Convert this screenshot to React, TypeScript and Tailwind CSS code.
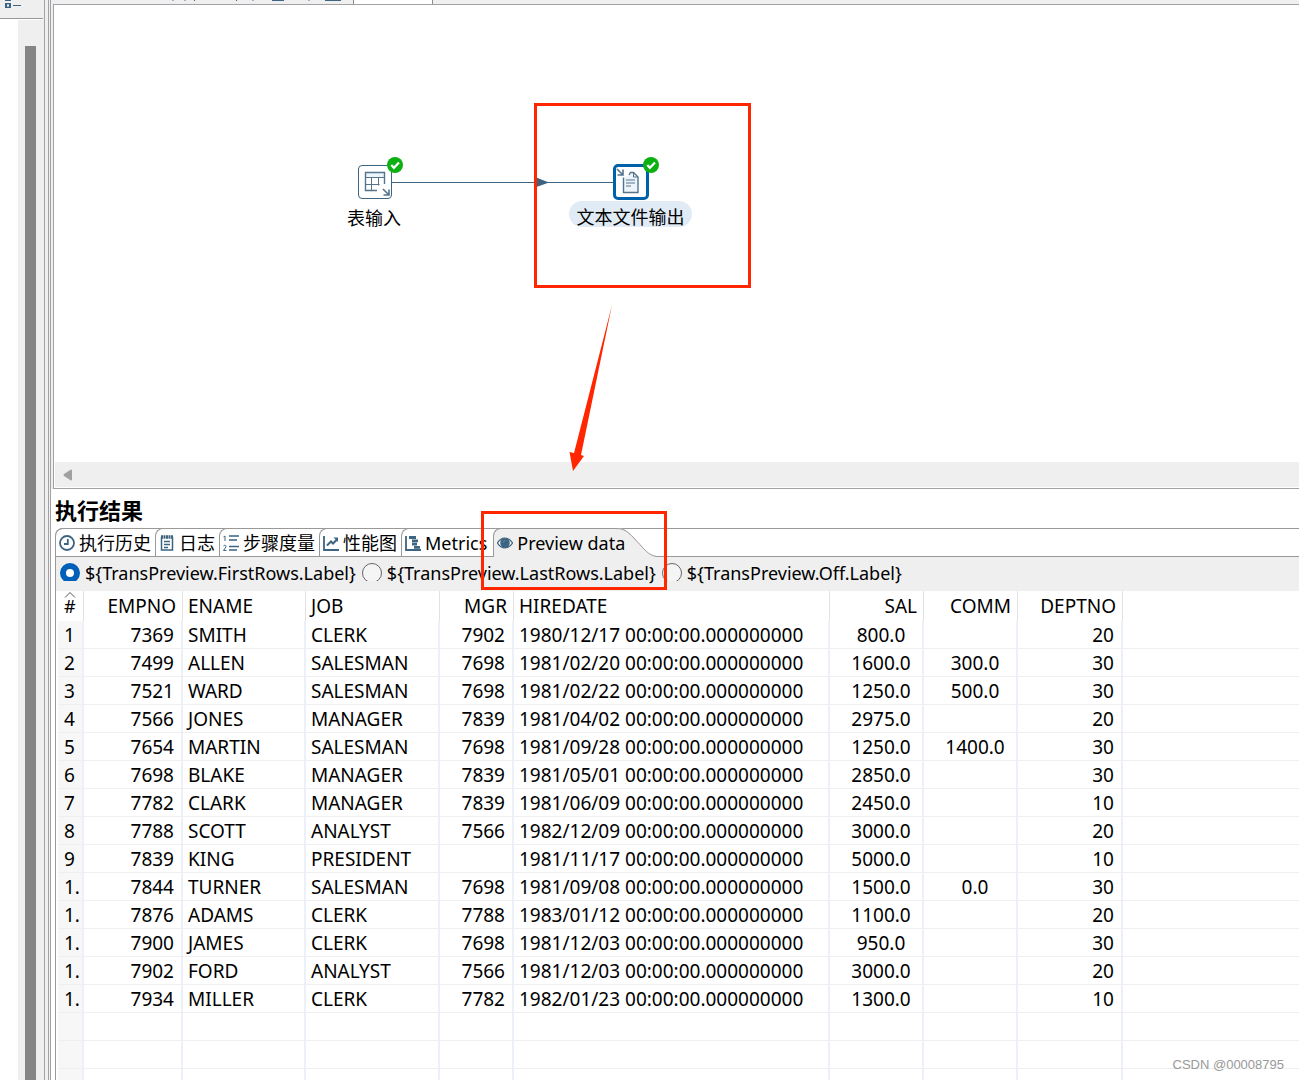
import type { ReactNode } from "react";

interface IEmployee {
	empno: string;
	ename: string;
	job: string;
	mgr: string;
	hiredate: string;
	sal: string;
	comm: string;
	deptno: string;
}

function employee(
	empno: string,
	ename: string,
	job: string,
	mgr: string,
	date: string,
	sal: string,
	comm: string,
	deptno: string,
): IEmployee {
	return { empno, ename, job, mgr, hiredate: `${date} 00:00:00.000000000`, sal, comm, deptno };
}

const employees: IEmployee[] = [
	employee("7369", "SMITH", "CLERK", "7902", "1980/12/17", "800.0", "", "20"),
	employee("7499", "ALLEN", "SALESMAN", "7698", "1981/02/20", "1600.0", "300.0", "30"),
	employee("7521", "WARD", "SALESMAN", "7698", "1981/02/22", "1250.0", "500.0", "30"),
	employee("7566", "JONES", "MANAGER", "7839", "1981/04/02", "2975.0", "", "20"),
	employee("7654", "MARTIN", "SALESMAN", "7698", "1981/09/28", "1250.0", "1400.0", "30"),
	employee("7698", "BLAKE", "MANAGER", "7839", "1981/05/01", "2850.0", "", "30"),
	employee("7782", "CLARK", "MANAGER", "7839", "1981/06/09", "2450.0", "", "10"),
	employee("7788", "SCOTT", "ANALYST", "7566", "1982/12/09", "3000.0", "", "20"),
	employee("7839", "KING", "PRESIDENT", "", "1981/11/17", "5000.0", "", "10"),
	employee("7844", "TURNER", "SALESMAN", "7698", "1981/09/08", "1500.0", "0.0", "30"),
	employee("7876", "ADAMS", "CLERK", "7788", "1983/01/12", "1100.0", "", "20"),
	employee("7900", "JAMES", "CLERK", "7698", "1981/12/03", "950.0", "", "30"),
	employee("7902", "FORD", "ANALYST", "7566", "1981/12/03", "3000.0", "", "20"),
	employee("7934", "MILLER", "CLERK", "7782", "1982/01/23", "1300.0", "", "10"),
];

const columns: {
	key: keyof IEmployee;
	label: string;
	width: string;
	head: string;
	cell: string;
}[] = [
	{ key: "empno", label: "EMPNO", width: "w-[99px]", head: "text-right pr-1.5", cell: "text-right pr-[7px]" },
	{ key: "ename", label: "ENAME", width: "w-[123px]", head: "text-left pl-[5px]", cell: "text-left pl-[5px]" },
	{ key: "job", label: "JOB", width: "w-[134px]", head: "text-left pl-[5px]", cell: "text-left pl-[5px]" },
	{ key: "mgr", label: "MGR", width: "w-[74px]", head: "text-right pr-1.5", cell: "text-right pr-[7px]" },
	{ key: "hiredate", label: "HIREDATE", width: "w-[316px]", head: "text-left pl-[5px]", cell: "text-left pl-[5px]" },
	{ key: "sal", label: "SAL", width: "w-[94px]", head: "text-right pr-1.5", cell: "text-center pl-2.5" },
	{ key: "comm", label: "COMM", width: "w-[94px]", head: "text-right pr-1.5", cell: "text-center pl-2.5" },
	{ key: "deptno", label: "DEPTNO", width: "w-[105px]", head: "text-right pr-1.5", cell: "text-right pr-[7px]" },
];

const emptyRows = [0, 1, 2];

const tabs: { label: string; icon: ReactNode }[] = [
	{
		label: "执行历史",
		icon: (
			<>
				<circle cx="8" cy="8" r="7" strokeWidth="1.8" />
				<path d="M8.8 4v5H5" strokeWidth="1.8" />
			</>
		),
	},
	{
		label: "日志",
		icon: (
			<>
				<path d="M2.500 2v13h11V2" strokeWidth="1.500" />
				<path d="M2 2h12.500" strokeWidth="3.500" strokeDasharray="2 .5" />
				<path d="M5 6.500h6M5 9.500h6M5 12.500h4" strokeWidth="1.300" />
			</>
		),
	},
	{
		label: "步骤度量",
		icon: (
			<>
				<path d="M6 1h10.500M6 5h8M6 11.500h10.500M6 15h8" strokeWidth="1.500" />
				<path d="M.5 2 2 1v5M.5 11c1-1.3 3-.8 2.500.8L.5 15.500H3.500" strokeWidth="1" />
			</>
		),
	},
	{
		label: "性能图",
		icon: (
			<>
				<path d="M1 1v14h15" strokeWidth="1.8" />
				<path d="m4 10.500 4-4 2 2 4-4" strokeWidth="2" />
				<path d="M10.500 2.500H15V7z" fill="#3d6480" stroke="none" />
			</>
		),
	},
	{
		label: "Metrics",
		icon: (
			<>
				<path d="M1 1v14h15" strokeWidth="1.8" />
				<path d="M4 2.500h7M7 5.800h6M7 9.200h5M9 12.300h6" strokeWidth="2.800" />
			</>
		),
	},
	{
		label: "Preview data",
		icon: (
			<>
				<path d="M.5 8c4-6.500 11-6.500 15 0-4 6.500-11 6.500-15 0z" fill="#fff" strokeWidth="1.300" />
				<circle cx="8" cy="8" r="4.800" fill="#3d6480" stroke="none" />
				<path d="M6 7.500c.2-1 .8-1.700 1.800-2" stroke="#6d8ba1" strokeWidth="1" />
			</>
		),
	},
];

const previewModes = [
	"${TransPreview.FirstRows.Label}",
	"${TransPreview.LastRows.Label}",
	"${TransPreview.Off.Label}",
];

function SidePanel() {
	return (
		<aside className="flex w-[43px] shrink-0 flex-col bg-white">
			<div className="h-[19px] shrink-0 border-b border-[#999999] bg-[#efefef]">
				<svg width="24" height="10" viewBox="0 0 24 10" fill="#3d6480">
					<path d="M5 0h6v1H5zM5 3h6v5H5z" />
					<path d="M7 4.500h2v2H7z" fill="#fff" />
					<path d="M13 5h8v1h-8z" />
				</svg>
			</div>
			<div className="mt-px ml-[18px] flex flex-1 justify-center bg-[#efefef] px-[7px] pt-[26px]">
				<div className="w-full bg-[#858585]" />
			</div>
		</aside>
	);
}

function Sash() {
	return (
		<div className="flex shrink-0 bg-[#efefef] pl-px">
			<div className="w-[5px] border-x border-[#a1a1a6]" />
			<div className="ml-px w-px bg-[#a1a1a6]" />
		</div>
	);
}

function SuccessBadge() {
	return (
		<svg width="16" height="16" viewBox="0 0 16 16" fill="none">
			<circle cx="8" cy="8" r="8" fill="#0db010" />
			<path d="m4.300 8 2.600 2.800L12 5.500" stroke="#fff" strokeWidth="2.200" />
		</svg>
	);
}

function Canvas() {
	return (
		<section className="flex h-[485px] shrink-0 flex-col border-t border-b border-l border-[#a1a1a6] bg-white">
			<div className="relative flex-1">
				<svg
					className="absolute top-[172px] left-[338px]"
					width="222"
					height="12"
					viewBox="0 0 222 12"
				>
					<path d="M0 5.500h222" stroke="#3d6480" />
					<path d="M143 0v10.500l14-5z" fill="#3d6480" />
				</svg>

				<div className="absolute top-[160px] left-[293px] flex w-[54px] flex-col items-center">
					<div className="relative ml-0.5 size-[34px] rounded-[4px] border border-[#3d6480] bg-white">
						<svg width="32" height="32" viewBox="0 0 32 32" fill="none" stroke="#54748d">
							<path d="M6.500 6.500h19v5h-19z" fill="#edf5fb" stroke="none" />
							<path d="M18 24.500H6.500v-18h19V18" strokeWidth="1.400" />
							<path d="M6.500 11.500h19M6.500 18.500h14M12.500 11.500v13M19.500 11.500v8" />
							<path d="m24 23 5.500 5.500M30 23.500V29h-5.500" strokeWidth="1.600" />
						</svg>
						<div className="absolute -top-[9px] left-7">
							<SuccessBadge />
						</div>
					</div>
					<div className="mt-1.5 text-[18px] leading-[26px] whitespace-nowrap">表输入</div>
				</div>

				<div className="absolute top-[159px] left-[515px] flex w-[123px] flex-col items-center">
					<div className="relative size-[36px] rounded-[5px] border-3 border-[#0061ab] bg-white">
						<svg width="30" height="30" viewBox="0 0 30 30" fill="none" stroke="#54748d">
							<path d="M7.500 10.500v15H22V10l-4-4.500h-3L14 8z" fill="#edf5fb" stroke="none" />
							<path d="M7.500 10.500v15H22V10l-4.500-4.500h-3L13 8" strokeWidth="1.400" />
							<path d="M17.500 5.500V10H22M10 13h9M10 16h9M10 19h5" />
							<path d="m1 2 5.500 5.500M7 2.500V8H1.500" strokeWidth="1.600" />
						</svg>
						<div className="absolute -top-2.5 left-[27px]">
							<SuccessBadge />
						</div>
					</div>
					<div className="mt-px flex h-[26px] w-full justify-center rounded-full bg-[#e1ebf5] pt-[3px] text-[18px] leading-[26px] whitespace-nowrap">
						文本文件输出
					</div>
				</div>
			</div>

			<div className="mb-px ml-px flex h-[25px] items-center bg-[#efefef] pl-2">
				<button type="button" aria-label="向左滚动">
					<svg width="9" height="12" viewBox="0 0 9 12" fill="#a0a0a0">
						<path d="M8 .5 1 5Q0 6 1 7l7 4.500q1 0 1-1v-9q0-1-1-1z" />
					</svg>
				</button>
			</div>
		</section>
	);
}

function ResultTabs() {
	return (
		<div
			role="tablist"
			className="flex h-[29px] shrink-0 rounded-tl-[8px] border-t border-b border-[#999999] bg-white"
		>
			{tabs.map((tab) => {
				const isActive = tab.label === "Preview data";

				return (
					<button
						key={tab.label}
						type="button"
						role="tab"
						aria-selected={isActive}
						className={
							isActive
								? "relative ml-0.5 -mt-px -mb-px flex items-center gap-1 rounded-tl-[8px] border-t border-l border-[#999999] bg-[#efefef] pl-[3px] text-[18px] leading-[26px] whitespace-nowrap"
								: "-mt-px flex items-center gap-1 rounded-tl-[8px] border-t border-l border-[#999999] pr-1 pl-[3px] text-[18px] leading-[26px] whitespace-nowrap"
						}
					>
						{isActive && (
							<svg
								className="absolute -top-px left-full -ml-2"
								width="40"
								height="29"
								viewBox="0 0 40 29"
							>
								<path d="M0 0h2c9 1 13 8 19 14 6 7 10 14 19 14.500V29H0z" fill="#efefef" />
								<path
									d="M0 .5c10 0 15 8 21 14s10 13 19 14"
									fill="none"
									stroke="#999999"
								/>
							</svg>
						)}
						<svg
							className="shrink-0"
							width="16"
							height="16"
							viewBox="0 0 16 16"
							fill="none"
							stroke="#3d6480"
							strokeWidth="1.200"
						>
							{tab.icon}
						</svg>
						<span className="relative">{tab.label}</span>
					</button>
				);
			})}
		</div>
	);
}

function PreviewModes() {
	return (
		<div className="flex h-[34px] shrink-0 items-start gap-1.5 bg-[#efefef] pt-1.5 pl-1">
			{previewModes.map((mode, index) => (
				<label
					key={mode}
					className="flex items-start gap-[5px] text-[18px] leading-5 whitespace-nowrap"
				>
					<span className="h-[18px] shrink-0 overflow-hidden">
						<input
							type="radio"
							name="preview-mode"
							defaultChecked={index === 0}
							className="block size-5 appearance-none rounded-full border border-[#666666] bg-[#f5f5f5] checked:border-[6px] checked:border-[#005fb8] checked:bg-white"
						/>
					</span>
					{mode}
				</label>
			))}
		</div>
	);
}

function PreviewTable() {
	return (
		<table className="ml-0.5 w-full table-fixed border-separate border-spacing-0 text-[19px] leading-[25px]">
			<colgroup>
				<col className="w-[26px]" />
				{columns.map((column) => (
					<col key={column.key} className={column.width} />
				))}
				<col />
			</colgroup>
			<thead>
				<tr className="h-[30px]">
					<th className="relative border-r border-[#e2e2e2] p-0 pl-1.5 text-left text-[18px] font-normal">
						<svg
							className="absolute top-px left-1.5"
							width="12"
							height="6"
							viewBox="0 0 12 6"
							fill="none"
							stroke="#555555"
						>
							<path d="m1 5.500 5-5 5 5" />
						</svg>
						#
					</th>
					{columns.map((column) => (
						<th
							key={column.key}
							className={`border-r border-[#e2e2e2] p-0 font-normal ${column.head}`}
						>
							{column.label}
						</th>
					))}
					<th className="p-0" />
				</tr>
			</thead>
			<tbody>
				{employees.map((row, index) => (
					<tr key={row.empno} className="h-[28px]">
						<td className="border-r-2 border-b border-r-[#ecf1f9] border-b-[#efefef] bg-[#f7f7f7] p-0 pt-0.5 pl-1.5 whitespace-nowrap">
							{index < 9 ? index + 1 : "1."}
						</td>
						{columns.map((column) => (
							<td
								key={column.key}
								className={`border-r-2 border-b border-r-[#ecf1f9] border-b-[#efefef] p-0 pt-0.5 whitespace-nowrap ${column.cell}`}
							>
								{row[column.key]}
							</td>
						))}
						<td className="border-b border-[#efefef] p-0" />
					</tr>
				))}
				{emptyRows.map((row) => (
					<tr key={row} className="h-[28px]">
						<td className="border-r-2 border-b border-r-[#ecf1f9] border-b-[#efefef] bg-[#f7f7f7] p-0" />
						{columns.map((column) => (
							<td
								key={column.key}
								className="border-r-2 border-b border-r-[#ecf1f9] border-b-[#efefef] p-0"
							/>
						))}
						<td className="border-b border-[#efefef] p-0" />
					</tr>
				))}
			</tbody>
		</table>
	);
}

// Red boxes and arrow drawn over the window
function Annotations() {
	return (
		<div className="pointer-events-none">
			<div className="absolute top-[103px] left-[534px] h-[185px] w-[217px] border-3 border-[#ff2600]" />
			<div className="absolute top-[511px] left-[481px] h-[79px] w-[186px] border-3 border-[#ff2600]" />
			<svg
				className="absolute top-[305px] left-[569px]"
				width="44"
				height="166"
				viewBox="0 0 44 166"
				fill="#ff2600"
			>
				<path d="M43 0 12 150l3 1L4 166 .5 147l4.500 1z" />
			</svg>
			<div className="absolute right-[15px] bottom-1.5 font-['Liberation_Sans',sans-serif] text-[13px] leading-[18px] text-[#999999]">
				CSDN @00008795
			</div>
		</div>
	);
}

export default function App() {
	return (
		<div className="relative flex h-screen overflow-hidden bg-white font-['Noto_Sans','Noto_Sans_CJK_SC',sans-serif] text-black">
			<SidePanel />
			<Sash />
			<main className="flex min-w-0 flex-1 flex-col">
				<div className="flex h-1 shrink-0 bg-[#efefef]">
					<svg width="302" height="4" viewBox="0 0 302 4" fill="#3d6480">
						<path d="M143 0h1v1h-1zM185 0h1v1h-1zM221 0h12v1h-12zM274 0h16v1h-16z" />
						<path d="M121 0h2v1h-2zM133 0h2v1h-2zM201 0h2v1h-2zM257 0h2v1h-2z" fill="#9fb4c4" />
					</svg>
					<div className="w-[80px] border-x border-[#8c8c8c] bg-white" />
				</div>
				<div className="flex shrink-0 flex-col bg-[#efefef] pl-0.5">
					<Canvas />
				</div>
				<section className="flex min-h-0 flex-1 flex-col pl-1">
					<h2 className="h-[39px] shrink-0 pt-[5px] text-[22px] leading-[32px] font-bold">执行结果</h2>
					<ResultTabs />
					<div className="min-h-0 flex-1 overflow-hidden border-l border-[#999999]">
						<PreviewModes />
						<PreviewTable />
					</div>
				</section>
			</main>
			<Annotations />
		</div>
	);
}
